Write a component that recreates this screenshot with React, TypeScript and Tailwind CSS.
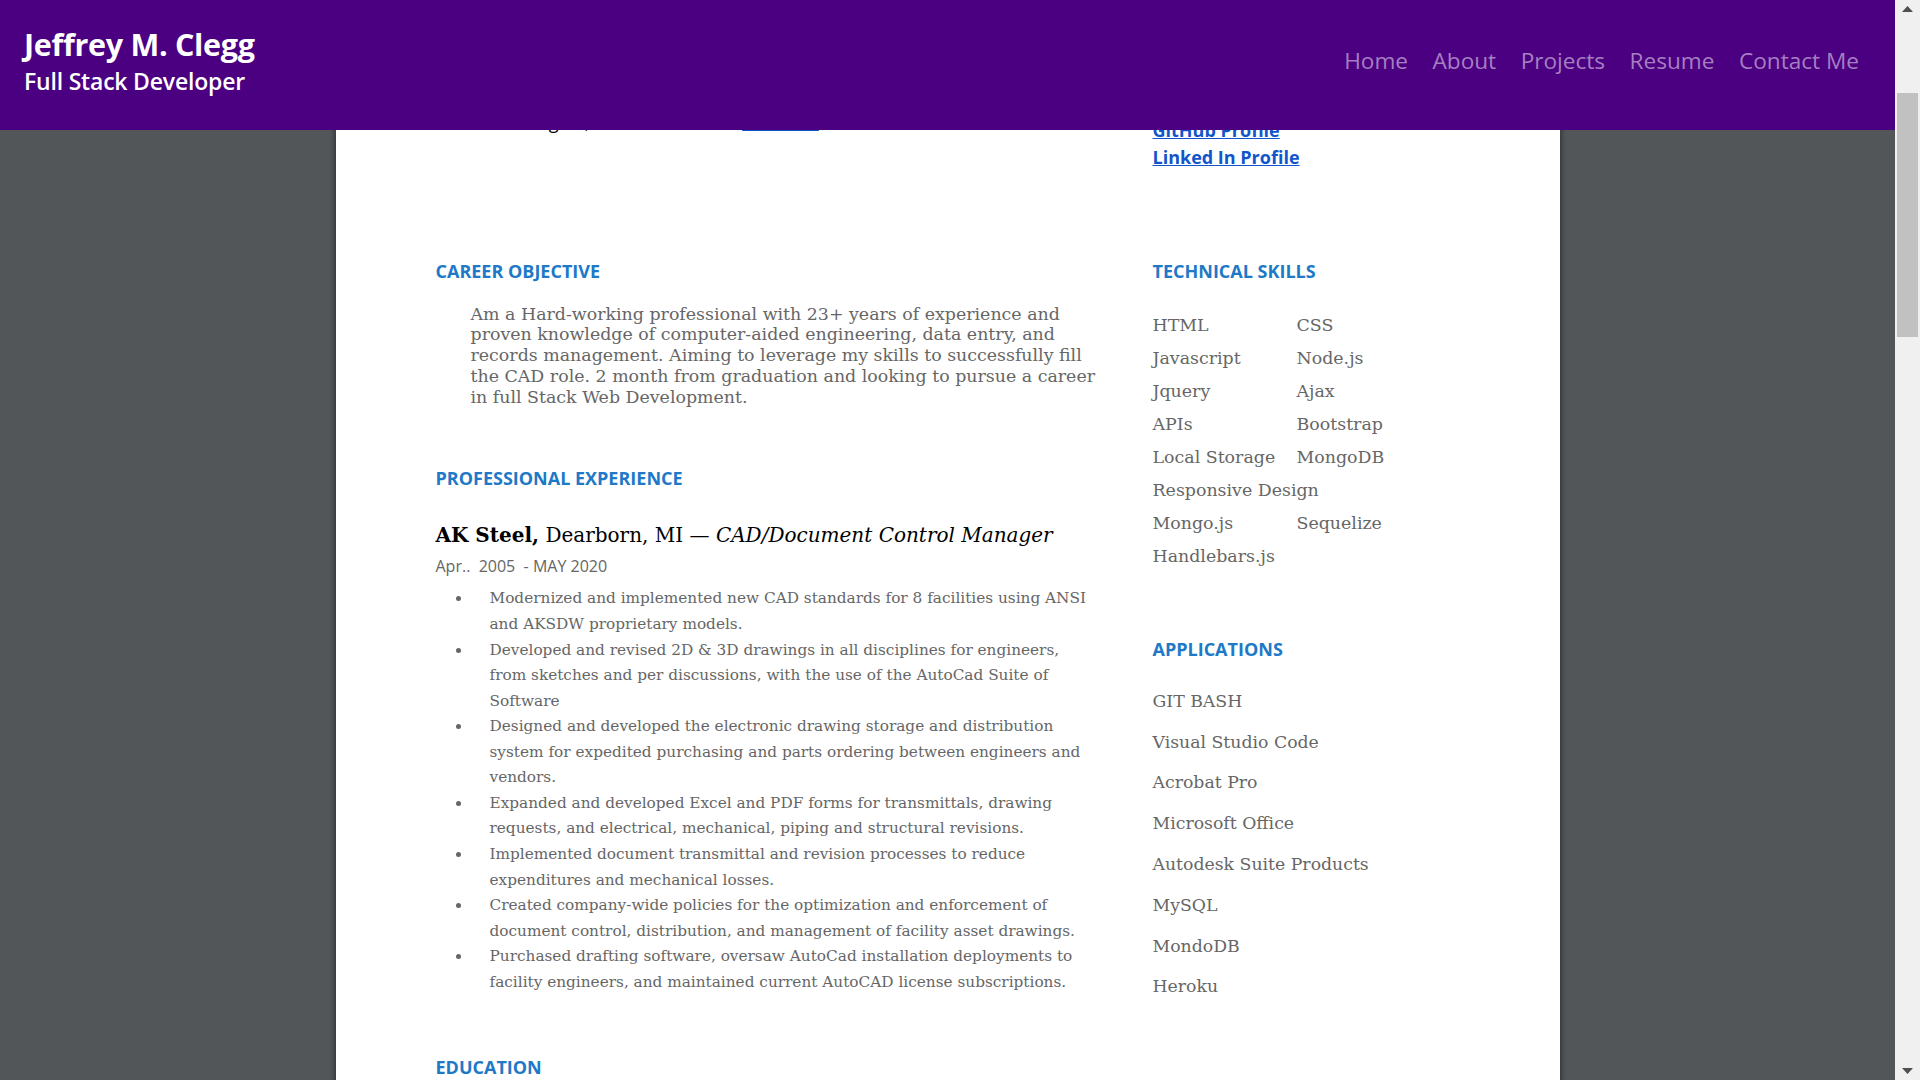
import React from 'react';

const navLinks = ['Home', 'About', 'Projects', 'Resume', 'Contact Me'];

const skills: [string, string][] = [
  ['HTML', 'CSS'],
  ['Javascript', 'Node.js'],
  ['Jquery', 'Ajax'],
  ['APIs', 'Bootstrap'],
  ['Local Storage', 'MongoDB'],
  ['Responsive Design', ''],
  ['Mongo.js', 'Sequelize'],
  ['Handlebars.js', ''],
];

const apps = [
  'GIT BASH',
  'Visual Studio Code',
  'Acrobat Pro',
  'Microsoft Office',
  'Autodesk Suite Products',
  'MySQL',
  'MondoDB',
  'Heroku',
];

// each bullet is split the way the resume wraps it
const duties: string[][] = [
  ['Modernized and implemented new CAD standards for 8 facilities using ANSI', 'and AKSDW proprietary models.'],
  [
    'Developed and revised 2D & 3D drawings in all disciplines for engineers,',
    'from sketches and per discussions, with the use of the AutoCad Suite of',
    'Software',
  ],
  [
    'Designed and developed the electronic drawing storage and distribution',
    'system for expedited purchasing and parts ordering between engineers and',
    'vendors.',
  ],
  [
    'Expanded and developed Excel and PDF forms for transmittals, drawing',
    'requests, and electrical, mechanical, piping and structural revisions.',
  ],
  ['Implemented document transmittal and revision processes to reduce', 'expenditures and mechanical losses.'],
  [
    'Created company-wide policies for the optimization and enforcement of',
    'document control, distribution, and management of facility asset drawings.',
  ],
  [
    'Purchased drafting software, oversaw AutoCad installation deployments to',
    'facility engineers, and maintained current AutoCAD license subscriptions.',
  ],
];

const serif = "font-['DejaVu_Serif',serif]";

const SectionTitle: React.FC<{ children: React.ReactNode; className?: string }> = ({ children, className = '' }) => (
  <h2 className={`font-['Open_Sans',sans-serif] text-[18px] leading-[24px] font-bold text-[#2079c7] ${className}`}>
    {children}
  </h2>
);

const Header: React.FC = () => (
  <header className="absolute inset-x-0 top-0 z-10 flex h-[130px] items-center justify-between bg-[#4b0082] pl-[24px] pr-[36px] font-['Open_Sans',sans-serif]">
    <div className="-mt-[8px] text-white">
      <h1 className="text-[30.5px] leading-[36px] font-bold tracking-[-0.3px]">Jeffrey M. Clegg</h1>
      <p className="mt-[4px] text-[23px] leading-[30px] font-semibold tracking-[-0.2px]">Full Stack Developer</p>
    </div>
    <nav className="-mt-[9px] flex gap-[24.5px] text-[22.6px] text-[#a57fc0]">
      {navLinks.map((link) => (
        <a key={link} href="#" className="hover:text-white">
          {link}
        </a>
      ))}
    </nav>
  </header>
);

const Scrollbar: React.FC = () => (
  <div className="flex w-[25px] shrink-0 flex-col items-center bg-[#f0f0f0]">
    <svg width="11" height="6" viewBox="0 0 11 6" className="mt-[6px]">
      <path d="M5.5 0 L11 6 L0 6 Z" fill="#505050" />
    </svg>
    <div className="mt-[81px] h-[244px] w-[21px] bg-[#c1c1c1]" />
    <div className="flex-1" />
    <svg width="11" height="6" viewBox="0 0 11 6" className="mb-[6px]">
      <path d="M0 0 L11 0 L5.5 6 Z" fill="#505050" />
    </svg>
  </div>
);

const App: React.FC = () => {
  return (
    <div className="flex h-screen w-full overflow-hidden bg-[#525659]">
      <div className="relative flex-1 overflow-hidden">
        <Header />

        <main className="mx-auto flex min-h-full w-[1224px] bg-white px-[100px] shadow-[0_0_4px_2px_rgba(0,0,0,0.35)]">
          {/* left column */}
          <section className="w-[655px]">
            <p className="mt-[109px] font-['Open_Sans',sans-serif] text-[18px] leading-[27px] whitespace-nowrap text-black">
              Dearborn Heights, MI · Reach me at:{' '}
              <a href="#" className="text-[#1155cc] underline">
                Email Me
              </a>
            </p>

            <SectionTitle className="mt-[123px]">CAREER OBJECTIVE</SectionTitle>
            <p className={`${serif} mt-[20.5px] pl-[35px] text-[17.4px] leading-[20.8px] whitespace-nowrap text-[#666]`}>
              Am a Hard-working professional with 23+ years of experience and
              <br />
              proven knowledge of computer-aided engineering, data entry, and
              <br />
              records management. Aiming to leverage my skills to successfully fill
              <br />
              the CAD role. 2 month from graduation and looking to pursue a career
              <br />
              in full Stack Web Development.
            </p>

            <SectionTitle className="mt-[59px]">PROFESSIONAL EXPERIENCE</SectionTitle>
            <h3 className={`${serif} mt-[31px] text-[20px] leading-[28px] whitespace-nowrap text-black`}>
              <span className="font-bold">AK Steel,</span> Dearborn, MI — <em>CAD/Document Control Manager</em>
            </h3>
            <p className="mt-[7px] font-['Open_Sans',sans-serif] text-[16px] leading-[20px] whitespace-pre text-[#666]">
              Apr..  2005  - MAY 2020
            </p>
            <ul className={`${serif} mt-[10px] text-[15.3px] leading-[25.55px] text-[#666]`}>
              {duties.map((lines, i) => (
                <li key={i} className="flex">
                  <span className="w-[54px] shrink-0 pl-[20px]">
                    <span className="mt-[10px] block h-[5px] w-[5px] rounded-full bg-[#666]" />
                  </span>
                  <span className="whitespace-nowrap">
                    {lines.map((line, j) => (
                      <React.Fragment key={j}>
                        {j > 0 && <br />}
                        {line}
                      </React.Fragment>
                    ))}
                  </span>
                </li>
              ))}
            </ul>

            <SectionTitle className="mt-[60px]">EDUCATION</SectionTitle>
            <div className="h-[80px]" />
          </section>

          {/* right column */}
          <aside className="ml-[62px] flex-1">
            <div className="mt-[117px] font-['Open_Sans',sans-serif] text-[18px] leading-[27px] font-bold text-[#1155cc]">
              <a href="#" className="block w-fit underline">
                GitHub Profile
              </a>
              <a href="#" className="block w-fit underline">
                Linked In Profile
              </a>
            </div>

            <SectionTitle className="mt-[88px]">TECHNICAL SKILLS</SectionTitle>
            <div className={`${serif} mt-[25.5px] text-[17.4px] leading-[33px] text-[#666]`}>
              {skills.map(([a, b]) => (
                <div key={a} className="flex whitespace-nowrap">
                  <span className="w-[144px] shrink-0">{a}</span>
                  <span>{b}</span>
                </div>
              ))}
            </div>

            <SectionTitle className="mt-[64px]">APPLICATIONS</SectionTitle>
            <ul className={`${serif} mt-[20.3px] text-[17.3px] leading-[40.8px] whitespace-nowrap text-[#666]`}>
              {apps.map((app) => (
                <li key={app}>{app}</li>
              ))}
            </ul>
          </aside>
        </main>
      </div>
      <Scrollbar />
    </div>
  );
};

export default App;
